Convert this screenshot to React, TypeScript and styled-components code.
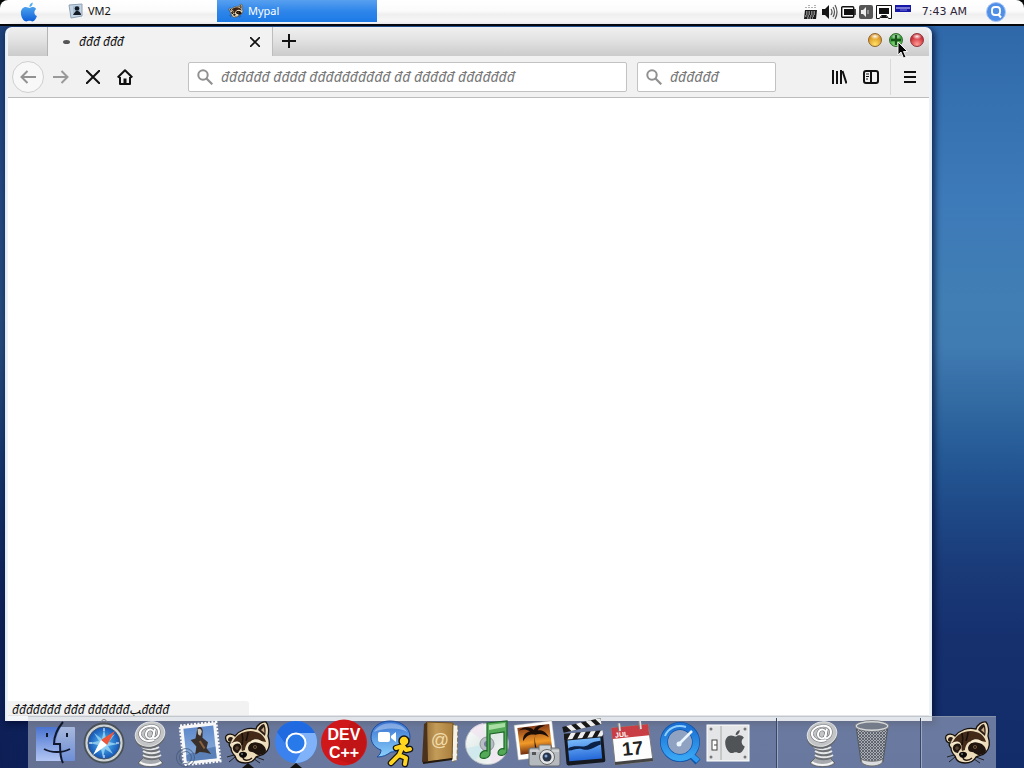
import React from 'react';
import styled, { createGlobalStyle, css } from 'styled-components';

const GlobalStyle = createGlobalStyle`
  * { box-sizing: border-box; }
  body {
    margin: 0;
    background: #122c6a;
    font-family: "Noto Sans", "DejaVu Sans", sans-serif;
    font-size: 12px;
    color: #111;
  }
  button { border: 0; padding: 0; background: none; font: inherit; color: inherit; cursor: default; }
  svg { display: block; }
`;

const Desktop = styled.div`
  min-height: 100vh;
  display: flex;
  flex-direction: column;
  position: relative;
  overflow: hidden;
  background:
    linear-gradient(90deg, rgba(6, 14, 60, 0.45), rgba(6, 14, 60, 0) 30%),
    linear-gradient(180deg, #2d66a8 0%, #3570b0 13%, #3d7ab9 26%, #407eb3 40%, #407bb2 45%,
      #336ba3 52%, #255a96 59%, #1f4a88 66%, #1a3a78 74%, #16306e 83%, #122c6a 100%);
`;

const MenuBar = styled.header`
  background: #050708;
  padding-bottom: 2px;
`;

const MenuBarFace = styled.div`
  height: 24px;
  display: flex;
  align-items: center;
  padding: 0 18px 0 20px;
  border-radius: 8px 8px 0 0;
  background: linear-gradient(180deg, #fff, #fbfbfb 45%, #efefef 60%, #fafafa);
`;

const AppleButton = styled.button`
  width: 18px;
  margin-right: 19px;
`;

const Task = styled.button<{ $active?: boolean }>`
  width: 160px;
  height: 22px;
  margin-bottom: 2px;
  display: flex;
  align-items: center;
  gap: 4px;
  padding-left: 11px;
  font-size: 11px;
  line-height: 22px;
  ${(p) => p.$active && css`
    color: #fff;
    background: linear-gradient(180deg, #58a0f0, #2f86ea 50%, #1c7ae6);
  `}
`;

const Tray = styled.div`
  margin-left: auto;
  display: flex;
  align-items: center;
  gap: 3px;
`;

const Clock = styled.time`
  margin: 0 16px 0 8px;
  font: 11px/22px "DejaVu Sans", sans-serif;
  color: #2c2338;
  white-space: nowrap;
`;

const Window = styled.main`
  flex: 1;
  display: flex;
  flex-direction: column;
  margin: 1px 92px 47px 5px;
  padding: 0 3px 5px;
  border-radius: 7px 7px 0 0;
  background: linear-gradient(90deg, #dfe9f3, #f3f5f8 3px, #f3f5f8 calc(100% - 3px), #dcebf3);
  box-shadow: 2px 2px 6px 1px rgba(4, 14, 50, 0.75);
`;

const TabStrip = styled.div`
  height: 29px;
  display: flex;
  border-radius: 7px 7px 0 0;
  background: linear-gradient(180deg, #f0f0f0, #e2e2e2 45%, #cbcbcb);
`;

const TabStub = styled.div`
  width: 40px;
  border-right: 1px solid #b4b4b4;
`;

const Tab = styled.div`
  width: 225px;
  display: flex;
  align-items: center;
  padding: 0 7px 0 15px;
  background: #f2f2f2;
  border-right: 1px solid #bdbdbd;
  font-size: 12px;
  font-style: italic;
`;

const Throbber = styled.span`
  width: 7px;
  height: 4px;
  margin-right: 9px;
  border-radius: 50%;
  background: #555;
`;

const TabTitle = styled.span`
  flex: 1;
`;

const TabAction = styled.button`
  width: 20px;
  height: 28px;
  display: grid;
  place-items: center;
`;

const NewTab = styled(TabAction)`
  width: 32px;
`;

const WindowControls = styled.div`
  margin-left: auto;
  display: flex;
  gap: 7px;
  padding: 6px 5px 0 0;
`;

const Control = styled.button<{ $edge: string; $core: string; $glow: string }>`
  position: relative;
  width: 14px;
  height: 14px;
  border-radius: 50%;
  border: 1px solid ${(p) => p.$edge};
  background:
    radial-gradient(ellipse 5px 3px at 50% 20%, rgba(255, 255, 255, 0.95), rgba(255, 255, 255, 0)),
    radial-gradient(circle at 50% 85%, ${(p) => p.$glow}, ${(p) => p.$core} 70%);
`;

const Pointer = styled.svg`
  position: absolute;
  left: 7px;
  top: 7px;
  z-index: 3;
`;

const PlusMark = styled.svg`
  margin: 1px;
`;

const Toolbar = styled.nav`
  height: 42px;
  display: flex;
  align-items: center;
  padding: 0 3px 0 4px;
  background: #f1f1f1;
  border-bottom: 1px solid #bcbcbc;
`;

const ToolButton = styled.button<{ $round?: boolean }>`
  width: 32px;
  height: 32px;
  display: grid;
  place-items: center;
  flex: none;
  ${(p) => p.$round && css`
    border: 1px solid #cfcfcf;
    border-radius: 50%;
    background: #f8f8f8;
    margin-right: 1px;
  `}
`;

const Field = styled.label<{ $narrow?: boolean }>`
  height: 30px;
  display: flex;
  align-items: center;
  gap: 8px;
  padding-left: 8px;
  background: #fff;
  border: 1px solid #c2c2c2;
  border-radius: 2px;
  ${(p) => (p.$narrow
    ? css`width: 139px; margin: 0 47px 0 10px;`
    : css`flex: 1; margin-left: 47px;`)}
  svg { flex: none; }
`;

const FieldInput = styled.input`
  flex: 1;
  min-width: 0;
  border: 0;
  padding: 0;
  outline: 0;
  background: none;
  font: italic 14px/20px "Noto Sans", sans-serif;
  &::placeholder { color: #777; opacity: 1; }
`;

const Divider = styled.span`
  width: 1px;
  height: 36px;
  margin: 0 3px;
  background: #d9d9d9;
`;

const Page = styled.section`
  flex: 1;
  display: flex;
  align-items: flex-end;
  background: #fff;
  border-bottom: 1px solid #e4e4e6;
`;

const Status = styled.div`
  width: 241px;
  height: 14px;
  padding-left: 4px;
  background: #f2f2f2;
  border-radius: 0 3px 0 0;
  font-size: 12px;
  line-height: 18px;
  font-style: italic;
  white-space: nowrap;
`;

const Dock = styled.footer`
  position: absolute;
  bottom: 0;
  left: 28px;
  right: 28px;
  height: 52px;
  display: flex;
  padding: 1px 4px 0;
  background: rgba(206, 212, 220, 0.46);
  border-top: 1px solid rgba(160, 170, 180, 0.5);
`;

const DockGroup = styled.div<{ $end?: boolean }>`
  display: flex;
  ${(p) => p.$end && css`margin-left: auto;`}
`;

const DockButton = styled.button`
  width: 48px;
  height: 50px;
  svg { overflow: visible; }
`;

const DockRule = styled.span`
  width: 1px;
  margin: 0 23px 0 24px;
  background: #39466a;
  box-shadow: 1px 0 rgba(255, 255, 255, 0.35);
`;

const Art = ({ children }: { children: React.ReactNode }) => (
  <svg width="48" height="50" viewBox="0 0 48 50" aria-hidden="true">{children}</svg>
);

const applePath =
  'M12 6c1-1 2.500-1.500 4-1 1.400.3 2.400 1 3 2-3 2-2.600 6.500.8 8-1 3-3 6-5 6-1.200 0-1.700-.7-3.200-.7S9.200 21 8 21C5 21 2 16 2 11.500 2 7.500 4.500 5 7.300 5 9.200 5 10.500 6 12 6zM11.500 4.800C11.300 2.500 13 .5 15.200 0c.2 2.500-1.500 4.600-3.700 4.800z';

const Magnifier = () => (
  <svg width="16" height="16" viewBox="0 0 16 16" fill="none" stroke="#909090" aria-hidden="true">
    <circle cx="6" cy="6" r="4.700" strokeWidth="2" />
    <path d="M9.500 9.500l5.800 5.800" strokeWidth="2.200" />
  </svg>
);

const Raccoon = () => (
  <g>
    <path d="M10 37l-7 2M11 39l-6 5M32 39l8 3M30 41l6 4" stroke="#222" strokeWidth="1" />
    <path d="M7 30c-2-2-2-4-1-5-4 0-5-5-4-7 2-3 7-2 9 0 5-6 13-9 21-7 1-4 6-8 10-7 3 3 3 10 2 14 2 6 2 12-2 16-3 4-8 3-10 5-2 4-6 6-11 6-6 0-9-3-10-7-2-2-4-5-4-8z" fill="#ecdcba" stroke="#17110d" strokeWidth="1.300" />
    <path d="M4 22c0-3 3-4 5-2l-2 4c-1 0-3-1-3-2zM34 12c1-3 4-6 6-6 2 3 2 8 1 12z" fill="#2b1c14" />
    <path d="M37 12l3-3 .5 6z" fill="#c9a884" />
    <path d="M10 22c4-7 14-11 22-8 5 1 9 5 10 10l-5-1c-5-2-8-1-12 1-2 1-4 5-4 8l-3 1c-1-3 0-5-1-7-2-3-5-2-9-1z" fill="#432a18" />
    <path d="M18 15c1 4 1 8 0 12M24 14c0 3-1 6-2 9" stroke="#17100c" strokeWidth="1.600" fill="none" />
    <path d="M24 30c1-5 6-7 11-5 4 1 7 4 7 8-1 3-5 4-8 4-3-1-4-3-6-3s-4-1-4-4zM9 29c1-4 7-5 8-1 1 3-2 4-3 7-3 0-6-3-5-6z" fill="#21150f" />
    <path d="M27 23c4-3 10-2 13 3-4-2-9-3-13-1zM8 26c2-3 6-3 8-1-3 0-5 0-8 2z" fill="#f7ecd2" />
    <circle cx="31" cy="29" r="1.800" fill="#9a7650" /><circle cx="31" cy="29" r=".9" />
    <circle cx="13" cy="30" r="1.500" fill="#9a7650" /><circle cx="13" cy="30" r=".8" />
    <path d="M15 36c1-3 7-3 8 0 0 3-3 4-4 4s-4-1-4-4z" fill="#0a0808" />
    <path d="M17 36h2" stroke="#aaa" /><path d="M19 40c1 3 6 3 9 0" fill="none" stroke="#241710" strokeWidth="1.300" />
  </g>
);

const SpringMail = () => (
  <g>
    <path d="M10 45l6-6h13l6 6c-4 5-21 5-25 0z" fill="#a6a9ad" stroke="#63666a" />
    <path d="M12 44c5 4 16 4 21 0" stroke="#f5f5f5" strokeWidth="2" fill="none" />
    <path d="M15 26h15l2 14c-4 3-13 3-17 0z" fill="#6d7074" />
    <path d="M14 29c4 3 13 3 17 0M15 33c4 3 13 3 17 0M15 37c4 3 14 3 18 0" fill="none" stroke="#e6e7e8" strokeWidth="1.800" />
    <ellipse cx="22" cy="18" rx="15.500" ry="12.500" transform="rotate(-18 22 18)" fill="#65686c" />
    <ellipse cx="22" cy="16" rx="15" ry="12" transform="rotate(-18 22 16)" fill="#c2c4c6" stroke="#e4e5e6" />
    <g fill="none" stroke="#77797d" strokeWidth="3.200">
      <ellipse cx="22" cy="16" rx="4" ry="4.500" transform="rotate(15 22 16)" />
      <path d="M27 11l-2 8c1 3 6 0 6-5 0-5-5-7-10-6-6 1-10 5-9 9s7 8 14 5" />
    </g>
    <g fill="none" stroke="#fff" strokeWidth="2">
      <ellipse cx="22" cy="16" rx="4" ry="4.500" transform="rotate(15 22 16)" />
      <path d="M27 11l-2 8c1 3 6 0 6-5 0-5-5-7-10-6-6 1-10 5-9 9s7 8 14 5" />
    </g>
  </g>
);

const icons: Record<string, React.ReactNode> = {
  Finder: (
    <g>
      <rect x="4" y="9" width="39" height="34" rx="1" fill="url(#finderR)" />
      <path d="M4 9h25c-4 7-5 12-5 18h5c-1 5-1 10 1 16H4z" fill="url(#finderL)" />
      <path d="M31 4c-6 7-9 15-9 22h6c0 8 0 14 3 19" fill="none" stroke="#11182c" strokeWidth="2" />
      <path d="M12 31c7 4 19 4 26 0" fill="none" stroke="#11182c" strokeWidth="1.800" />
      <path d="M15 15v4M35 15v4" stroke="#11182c" strokeWidth="2" />
    </g>
  ),
  Safari: (
    <g>
      <circle cx="24" cy="4" r="2.500" fill="none" stroke="#777" />
      <circle cx="24" cy="25" r="19.500" fill="#ced3d6" stroke="#4b5257" strokeWidth="1.800" />
      <circle cx="24" cy="25" r="16" fill="url(#safari)" stroke="#456" />
      <path d="M24 11l2 10 9-5-6 8 9 2-10 2 5 8-8-5-2 9-2-9-7 5 4-9-9-2 10-2-5-8 8 6z" fill="#a5dcf6" opacity=".75" />
      <path d="M35 13l-8 14-6-5z" fill="#ee5437" /><path d="M13 37l8-15 6 5z" fill="#fff" />
      <path d="M24 10v3M24 37v3M9 25h3M36 25h3" stroke="#fff" />
    </g>
  ),
  'Mail link': <SpringMail />,
  Mail: (
    <g transform="rotate(-6 24 25)">
      <rect x="6" y="6" width="36" height="39" fill="#f8f8f8" stroke="#f8f8f8" strokeWidth="3" strokeDasharray="2 1.500" />
      <rect x="9" y="9" width="30" height="33" fill="url(#stamp)" />
      <path d="M9 36c8-4 12 0 17-3s9-2 13-3v12H9z" fill="#5b80b8" />
      <path d="M23 10c2-2 5-1 5 3l-1 7 5 5-2 6 4 6-6-2-5-1-5 2 2-8-5-7 5-1z" fill="#3a302b" />
      <path d="M23 11c2-1 4 0 4 3l-2 4-2-2z" fill="#cfc6b7" /><path d="M24 23l4 8" stroke="#896141" strokeWidth="2" />
      <g fill="none" stroke="#405878" opacity=".7"><circle cx="8" cy="38" r="6" /><circle cx="8" cy="38" r="9" /></g>
    </g>
  ),
  Mypal: <g><Raccoon /><path d="M18 50l6-5 6 5z" fill="#111" /></g>,
  Chromium: (
    <g>
      <circle cx="24" cy="24" r="21" fill="#3b82ee" />
      <path d="M24 3a21 21 0 0 1 19 12H24a9 9 0 0 0-9 13L5 14A21 21 0 0 1 24 3z" fill="#1f6ae0" />
      <path d="M43 15a21 21 0 0 1-20 30l9-16c2-5 0-11-4-14z" fill="#80b2fa" />
      <circle cx="24" cy="25" r="10.500" fill="#fff" /><circle cx="24" cy="25" r="8.500" fill="#2879e9" />
      <path d="M18 50l6-5 6 5z" fill="#111" />
    </g>
  ),
  'Dev C++': (
    <g>
      <circle cx="24" cy="24.500" r="23" fill="#d0181a" /><path d="M31 3a23 23 0 0 1 0 43L14 40z" fill="#a90f12" opacity=".4" />
      <g fill="#fff" fontFamily="Liberation Sans, sans-serif" fontWeight="700" fontSize="16" textAnchor="middle">
        <text x="24" y="22">DEV</text><text x="24" y="40">C++</text>
      </g>
    </g>
  ),
  Chat: (
    <g>
      <path d="M22 3c12 0 20 7 20 16S33 34 23 34c-4 3-8 5-14 5 3-2 4-5 4-7C7 30 3 25 3 19 3 9 12 3 22 3z" fill="url(#bubble)" stroke="#1d4b9c" />
      <path d="M6 14c5-11 27-12 33 0-8-5-24-4-33 0z" fill="#fff" opacity=".35" />
      <rect x="10" y="14" width="12" height="10" rx="2" fill="#fff" /><path d="M23 18l5-4v10l-5-4z" fill="#fff" />
      <g stroke="#151515" strokeWidth="6.500" strokeLinecap="round" strokeLinejoin="round" fill="none">
        <path d="M35 28l-4 9 7 3-1 6M31 37l-8 8M35 28l-7 2M35 28l3 4 4-1" />
      </g>
      <circle cx="36" cy="23" r="5" fill="#ffd51f" stroke="#151515" strokeWidth="1.500" />
      <g stroke="#ffd51f" strokeWidth="4" strokeLinecap="round" strokeLinejoin="round" fill="none">
        <path d="M35 28l-4 9 7 3-1 6M31 37l-8 8M35 28l-7 2M35 28l3 4 4-1" />
      </g>
    </g>
  ),
  'Address Book': (
    <g transform="translate(2 1)">
      <path d="M34 5l6 2-1 34-5 2z" fill="#f4f1e8" stroke="#7e6c50" strokeDasharray="4 2" />
      <path d="M9 3l26 1-1 36-27 3z" fill="url(#book)" stroke="#76521e" />
      <path d="M9 3L6 5 4 43l2 1 4-2z" fill="#4b321b" /><path d="M5 44l29-4" stroke="#22190f" strokeWidth="2" />
      <text x="22" y="27" fontSize="18" fontFamily="Liberation Sans, sans-serif" textAnchor="middle" fill="#f1dba9">@</text>
    </g>
  ),
  iTunes: (
    <g>
      <ellipse cx="23" cy="26" rx="21.500" ry="20.500" fill="url(#disc)" stroke="#b4bac0" />
      <path d="M23 26L6 13c4-5 8-7 13-8zM23 26l18 10c-3 5-7 8-13 10z" fill="#f1e2f1" opacity=".7" />
      <path d="M23 26L3 30c1 6 4 10 8 13z" fill="#c9e8f0" opacity=".7" />
      <circle cx="23" cy="26" r="7" fill="#b9bec5" stroke="#8e949b" /><circle cx="23" cy="26" r="3" fill="#70809a" />
      <path d="M23 5l20-2v30c-1 5-9 6-9 2 0-3 3-5 6-4V14l-14 2v20c-1 5-10 6-10 2 0-4 4-6 7-5z" fill="#53a957" stroke="#1d6728" strokeWidth="1.200" />
      <path d="M25 7l16-2v4l-16 3z" fill="#a9dfa4" />
    </g>
  ),
  iPhoto: (
    <g>
      <g transform="rotate(-7 22 22)">
        <rect x="4" y="5" width="38" height="35" fill="#fff" stroke="#aaa" strokeWidth=".5" /><rect x="7" y="8" width="32" height="27" fill="url(#sunset)" />
        <path d="M22 35c0-8 0-13 2-18-6-2-9 0-13 5 0-6 4-9 8-9-4-3-7-3-11-2 5-4 12-3 15 1 3-5 8-4 12-3-5 1-7 2-8 4 5 0 8 3 10 8-5-4-8-5-13-4-2 6-1 12 1 18z" fill="#1c0d07" />
      </g>
      <rect x="17" y="30" width="31" height="18" rx="2" fill="#b5babf" stroke="#666b70" />
      <rect x="27" y="27" width="12" height="6" rx="1" fill="#cbd0d3" stroke="#777" /><path d="M18 33h29" stroke="#e5e7e8" />
      <circle cx="35" cy="39" r="7.500" fill="#e2e4e5" stroke="#666" /><circle cx="35" cy="39" r="4.500" fill="#29364a" /><circle cx="34" cy="38" r="1.500" fill="#85a8db" />
      <rect x="20" y="34" width="4" height="3" fill="#555" />
    </g>
  ),
  iMovie: (
    <g transform="rotate(-5 24 28)">
      <rect x="5" y="15" width="39" height="31" rx="2" fill="#15191f" /><rect x="8" y="21" width="33" height="21" fill="url(#movie)" />
      <path d="M8 29c8-4 15 2 21-2 4-3 8-2 12-3v4c-8 2-12 6-19 3-5-2-10 1-14 0z" fill="#0b2147" />
      <rect x="5" y="14" width="39" height="6" fill="#171717" /><path d="M8 20l4-6h5l-4 6zM18 20l4-6h5l-4 6zM28 20l4-6h5l-4 6zM38 20l4-6h2v4l-1 2z" fill="#eee" />
      <g transform="rotate(-8 5 14)"><rect x="5" y="7" width="39" height="6" fill="#171717" /><path d="M9 7l4 6h5l-4-6zM19 7l4 6h5l-4-6zM29 7l4 6h5l-4-6zM39 7l4 6h1V8l-1-1z" fill="#eee" /></g>
    </g>
  ),
  Calendar: (
    <g transform="rotate(-6 24 25)">
      <path d="M5 8h37l1 37H5z" fill="#fdfdfd" stroke="#7c7c7c" /><path d="M5 8h37v11H5z" fill="#c93d44" /><path d="M5 42h38v3H5z" fill="#444" />
      <path d="M13 4v8M34 4v8" stroke="#ddd" strokeWidth="2.500" /><path d="M12 4v8M33 4v8" stroke="#666" strokeWidth=".8" />
      <text x="8" y="18" fontSize="7" fontWeight="700" fontFamily="Liberation Sans, sans-serif" fill="#fff">JUL</text>
      <text x="24" y="37" fontSize="19" fontWeight="700" fontFamily="Liberation Sans, sans-serif" textAnchor="middle" fill="#222">17</text>
    </g>
  ),
  QuickTime: (
    <g>
      <circle cx="24" cy="25" r="15" fill="#9fb3d2" opacity=".7" />
      <path d="M33 35l9 9" stroke="#0e55ac" strokeWidth="7" />
      <circle cx="24" cy="24" r="16" fill="none" stroke="#0e55ac" strokeWidth="8" />
      <path d="M32 34l10 9" stroke="#2e9bf0" strokeWidth="5" />
      <circle cx="24" cy="24" r="16" fill="none" stroke="url(#qt)" strokeWidth="6.500" />
      <path d="M9 18c3-8 12-12 21-9" fill="none" stroke="#8fd0ff" strokeWidth="2" />
      <path d="M24 25l12-12" stroke="#eaf6ff" strokeWidth="2.500" /><circle cx="23" cy="26" r="2.500" fill="#eaf6ff" />
    </g>
  ),
  'System Preferences': (
    <g>
      <rect x="3" y="7" width="42" height="36" fill="#e4e5e6" stroke="#fff" /><path d="M17 8v34" stroke="#a8a8a8" />
      <g fill="#777"><circle cx="7" cy="11" r="1.500" /><circle cx="7" cy="39" r="1.500" /><circle cx="41" cy="11" r="1.500" /><circle cx="41" cy="39" r="1.500" /></g>
      <rect x="8" y="22" width="5" height="10" fill="#fff" stroke="#444" /><path d="M10 27h3" stroke="#444" />
      <path d={applePath} transform="translate(19 12) scale(1.100)" fill="#515457" />
    </g>
  ),
};

const Trash = () => (
  <g>
    <path d="M8 8l5 36c5 5 17 5 22 0l5-36z" fill="url(#mesh)" stroke="#55585e" />
    <path d="M13 41c5 3 17 3 22 0l-1 4c-5 4-15 4-20 0z" fill="#dcdddf" stroke="#777" />
    <ellipse cx="24" cy="8" rx="16" ry="4.500" fill="#757c89" stroke="#d8dadb" strokeWidth="1.800" />
    <ellipse cx="24" cy="8" rx="17" ry="5.500" fill="none" stroke="#606469" strokeWidth=".7" />
  </g>
);

const HiddenDefs = styled.svg`
  position: absolute;
`;

const Defs = () => (
  <HiddenDefs width="0" height="0" aria-hidden="true">
    <defs>
      <linearGradient id="finderL" x2="0" y2="1"><stop stopColor="#4a74d0" /><stop offset="1" stopColor="#b3c6f4" /></linearGradient>
      <linearGradient id="finderR" x2="0" y2="1"><stop stopColor="#a7b8dd" /><stop offset="1" stopColor="#6d8ed6" /></linearGradient>
      <radialGradient id="safari"><stop stopColor="#57c1f4" /><stop offset="1" stopColor="#1454b6" /></radialGradient>
      <linearGradient id="stamp" x2="0" y2="1"><stop stopColor="#5f8acb" /><stop offset="1" stopColor="#8fafdc" /></linearGradient>
      <linearGradient id="bubble" x2="0" y2="1"><stop stopColor="#356fce" /><stop offset="1" stopColor="#8bd0fc" /></linearGradient>
      <linearGradient id="book"><stop stopColor="#96703a" /><stop offset=".4" stopColor="#c49c59" /><stop offset="1" stopColor="#aa7f3e" /></linearGradient>
      <linearGradient id="disc" x2="1" y2="1"><stop stopColor="#fff" /><stop offset=".5" stopColor="#dfe9e6" /><stop offset="1" stopColor="#fff" /></linearGradient>
      <linearGradient id="sunset" x2="0" y2="1"><stop stopColor="#883c19" /><stop offset=".6" stopColor="#f29a28" /><stop offset="1" stopColor="#6e2c0e" /></linearGradient>
      <linearGradient id="movie" x2="0" y2="1"><stop stopColor="#77b8fa" /><stop offset="1" stopColor="#2468d8" /></linearGradient>
      <linearGradient id="qt" x2="0" y2="1"><stop stopColor="#1b6fd2" /><stop offset="1" stopColor="#39a6f4" /></linearGradient>
      <linearGradient id="apple" x2="0" y2="1"><stop stopColor="#5db6f5" /><stop offset="1" stopColor="#0e5fd8" /></linearGradient>
      <pattern id="mesh" width="3" height="3" patternUnits="userSpaceOnUse"><rect width="3" height="3" fill="#a9adb6" /><path d="M0 0l3 3M3 0L0 3" stroke="#4f545d" strokeWidth=".8" /></pattern>
    </defs>
  </HiddenDefs>
);

const TrayIcons = () => (
  <>
    <svg width="15" height="16" viewBox="0 0 15 16" aria-label="Keyboard">
      <path d="M3 4V2M6 4V1M9 4V2M12 4V1" fill="none" stroke="#666" strokeDasharray="1 1" />
      <path d="M2 6h12l-1 9H1z" fill="#1a1a1a" />
      <path d="M3 8h10M3 10h10M2 12h10M4 14h6" stroke="#fff" strokeWidth=".9" strokeDasharray="1.500 1" />
    </svg>
    <svg width="17" height="16" viewBox="0 0 17 16" aria-label="Volume">
      <path d="M1 5h3l4-4v14l-4-4H1z" fill="#151515" /><path d="M10 5q2 3 0 6M12 3q3 5 0 10M14 1q4 7 0 14" fill="none" stroke="#555" strokeWidth="1.200" />
    </svg>
    <svg width="15" height="16" viewBox="0 0 15 16" aria-label="Battery">
      <rect x=".7" y="2.700" width="12" height="10.500" rx="1" fill="#fff" stroke="#111" strokeWidth="1.400" /><rect x="3" y="5" width="9" height="6" fill="#111" /><path d="M14 5v6" stroke="#111" strokeWidth="1.500" />
    </svg>
    <svg width="14" height="16" viewBox="0 0 14 16" aria-label="Sound">
      <rect y="1" width="14" height="14" rx="2" fill="#555" /><path d="M2 6h2l3-3v10l-3-3H2z" fill="#eee" /><path d="M9 6v4" stroke="#ccc" />
    </svg>
    <svg width="16" height="16" viewBox="0 0 16 16" aria-label="Display">
      <path d="M.5 1.500h15v13h-3l-2-3h-5l-2 3h-3z" fill="#fff" stroke="#111" /><path d="M3 4h10v6H3z" fill="#111" /><path d="M4 14l2-2h4l2 2z" fill="#111" />
    </svg>
    <svg width="16" height="16" viewBox="0 0 16 16" aria-label="Language">
      <path d="M0 1h16v7H0z" fill="#1717a8" /><path d="M1 4h14" stroke="#ddf" /><path d="M5 6h7" stroke="#77d" />
    </svg>
  </>
);

const HeadIcon = () => (
  <svg width="16" height="16" viewBox="0 0 16 16" aria-hidden="true">
    <path d="M1 2l13-1v12L3 15z" fill="#c4d4e4" stroke="#8fa2b5" /><path d="M5 3h7v9H5z" fill="#a9bfd2" />
    <circle cx="9" cy="5.500" r="2.300" fill="#151b24" /><path d="M5 12c1-2 2-3 3-4h2c2 1 3 2 3 4z" fill="#151b24" />
  </svg>
);

export default function App() {
  return (
    <Desktop>
      <GlobalStyle />
      <Defs />
      <MenuBar>
        <MenuBarFace>
          <AppleButton aria-label="Apple menu">
            <svg width="18" height="21" viewBox="1 0 20 22"><path d={applePath} fill="url(#apple)" /></svg>
          </AppleButton>
          <Task><HeadIcon />VM2</Task>
          <Task $active>
            <svg width="16" height="16" viewBox="0 0 48 50" aria-hidden="true"><Raccoon /></svg>
            Mypal
          </Task>
          <Tray>
            <TrayIcons />
            <Clock>7:43 AM</Clock>
            <button aria-label="Spotlight">
              <svg width="20" height="20" viewBox="0 0 20 20">
                <circle cx="10" cy="10" r="9.500" fill="#4f8fe8" stroke="#a9c6f2" />
                <rect x="6" y="5" width="8" height="8" rx="3" fill="none" stroke="#fff" strokeWidth="1.800" /><path d="M12 12l3 3.500" stroke="#fff" strokeWidth="2" />
              </svg>
            </button>
          </Tray>
        </MenuBarFace>
      </MenuBar>

      <Window>
        <TabStrip>
          <TabStub />
          <Tab>
            <Throbber />
            <TabTitle>đđđ đđđ</TabTitle>
            <TabAction aria-label="Close tab">
              <svg width="10" height="10" viewBox="0 0 10 10" stroke="#111" strokeWidth="1.600"><path d="M0 0l10 10M10 0L0 10" /></svg>
            </TabAction>
          </Tab>
          <NewTab aria-label="New tab">
            <svg width="14" height="14" viewBox="0 0 14 14" stroke="#111" strokeWidth="2"><path d="M7 0v14M0 7h14" /></svg>
          </NewTab>
          <WindowControls>
            <Control aria-label="Minimize" $edge="#8d6432" $core="#d9901b" $glow="#ffe168" />
            <Control aria-label="Zoom" $edge="#2e6a2b" $core="#339a35" $glow="#93e683">
              <PlusMark width="10" height="10" viewBox="0 0 10 10" stroke="#17541a" strokeWidth="2.400"><path d="M5 0v10M0 5h10" /></PlusMark>
              <Pointer width="11" height="18" viewBox="0 0 11 18" aria-hidden="true">
                <path d="M1 1v13l3-3 2.500 6 2.500-1-2.500-5.500H10.500z" fill="#050505" stroke="#fff" strokeWidth=".9" />
              </Pointer>
            </Control>
            <Control aria-label="Close" $edge="#8e3338" $core="#c9262f" $glow="#ff9a95" />
          </WindowControls>
        </TabStrip>

        <Toolbar>
          <ToolButton $round aria-label="Back">
            <svg width="16" height="14" viewBox="0 0 16 14" fill="none" stroke="#929292" strokeWidth="2"><path d="M7.500 1L1.500 7l6 6M1.500 7H16" /></svg>
          </ToolButton>
          <ToolButton aria-label="Forward">
            <svg width="16" height="14" viewBox="0 0 16 14" fill="none" stroke="#999" strokeWidth="2"><path d="M8.500 1l6 6-6 6M14.500 7H0" /></svg>
          </ToolButton>
          <ToolButton aria-label="Stop">
            <svg width="14" height="14" viewBox="0 0 14 14" stroke="#111" strokeWidth="2"><path d="M0 0l14 14M14 0L0 14" /></svg>
          </ToolButton>
          <ToolButton aria-label="Home">
            <svg width="16" height="16" viewBox="0 0 16 16" fill="none" stroke="#111" strokeWidth="2"><path d="M.7 8.500L8 1.300l7.300 7.200M3 8v7h10V8" strokeLinejoin="round" /><path d="M8 14.500v-5" strokeWidth="3" /></svg>
          </ToolButton>
          <Field>
            <Magnifier />
            <FieldInput aria-label="Address" placeholder="đđđđđđ đđđđ đđđđđđđđđđ đđ đđđđđ đđđđđđđ" />
          </Field>
          <Field $narrow>
            <Magnifier />
            <FieldInput aria-label="Search" placeholder="đđđđđđ" />
          </Field>
          <ToolButton aria-label="Library">
            <svg width="16" height="14" viewBox="0 0 16 14" stroke="#111" strokeWidth="2"><path d="M2 0v14M6 1v13M10 0v14M11.500 1l4 12.500" /></svg>
          </ToolButton>
          <ToolButton aria-label="Sidebars">
            <svg width="16" height="14" viewBox="0 0 16 14" fill="none" stroke="#111" strokeWidth="2"><rect x="1" y="1" width="14" height="12" rx="2" /><path d="M8 1v12" /><path d="M3 4h3M3 6.500h3M3 9h2" strokeWidth="1" /></svg>
          </ToolButton>
          <Divider />
          <ToolButton aria-label="Menu">
            <svg width="12" height="12" viewBox="0 0 12 12" stroke="#111" strokeWidth="2"><path d="M0 1h12M0 6h12M0 11h12" /></svg>
          </ToolButton>
        </Toolbar>

        <Page>
          <Status>đđđđđđđ đđđ đđđđđđﺐđđđđ</Status>
        </Page>
      </Window>

      <Dock>
        <DockGroup>
          {Object.entries(icons).map(([name, art]) => (
            <DockButton key={name} aria-label={name}><Art>{art}</Art></DockButton>
          ))}
        </DockGroup>
        <DockGroup $end>
          <DockRule />
          <DockButton aria-label="Web link"><Art><SpringMail /></Art></DockButton>
          <DockButton aria-label="Trash"><Art><Trash /></Art></DockButton>
          <DockRule />
          <DockButton aria-label="Mypal window"><Art><Raccoon /></Art></DockButton>
        </DockGroup>
      </Dock>
    </Desktop>
  );
}
